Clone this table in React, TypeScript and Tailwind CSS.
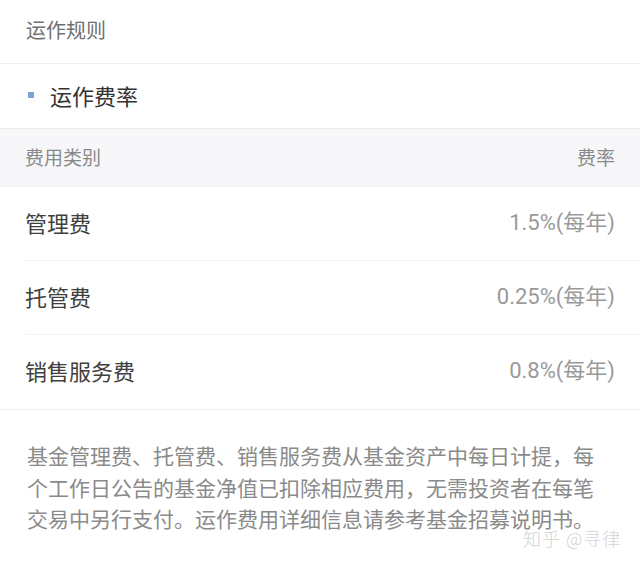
import React from "react";

const rows = [
  { name: "管理费", rate: "1.5%(每年)" },
  { name: "托管费", rate: "0.25%(每年)" },
  { name: "销售服务费", rate: "0.8%(每年)" },
];

export default function App() {
  return (
    <div
      className="relative w-[640px] h-[564px] overflow-hidden bg-white"
      style={{ fontFamily: '"Noto Sans CJK SC", "Noto Sans", Roboto, sans-serif' }}
    >
      <div className="h-[64px] flex items-center pl-[26px] pb-[3px] border-b border-[#efefef] text-[20px] text-[#707070]">
        运作规则
      </div>
      <div className="h-[65px] flex items-center pl-[28px] pb-[2px] border-b border-[#ebebeb]">
        <span className="w-[6px] h-[6px] bg-[#7da3d3] mr-[16px]" />
        <span className="text-[22px] text-[#333]">运作费率</span>
      </div>
      <div className="h-[58px] flex items-center justify-between px-[25px] bg-[#f7f7f9] border-b border-[#f0f0f0] text-[19px] text-[#8a8a8a]">
        <span>费用类别</span>
        <span>费率</span>
      </div>
      <div className="pl-[25px] border-b border-[#efefef]">
        {rows.map((r, i) => (
          <div
            key={r.name}
            className={`h-[74px] flex items-center justify-between pr-[25px] pb-[3px] ${i < rows.length - 1 ? "border-b border-[#f2f2f2]" : ""}`}
          >
            <span className="text-[22px] text-[#404040]">{r.name}</span>
            <span className="text-[22px] text-[#9a9a9a]" style={{ fontFamily: 'Roboto, "Noto Sans CJK SC", sans-serif' }}>
              {r.rate}
            </span>
          </div>
        ))}
      </div>
      <div className="pl-[27px] pr-[44px] pt-[30px] text-[21px] leading-[31.5px] text-[#8a8a8a]">
        基金管理费、托管费、销售服务费从基金资产中每日计提，每个工作日公告的基金净值已扣除相应费用，无需投资者在每笔交易中另行支付。运作费用详细信息请参考基金招募说明书。
      </div>
      <div className="absolute left-[523px] top-[529px] text-[18px] leading-[18px] font-light text-[#d4d4d4] tracking-[1px]">
        知乎 @寻律
      </div>
    </div>
  );
}
